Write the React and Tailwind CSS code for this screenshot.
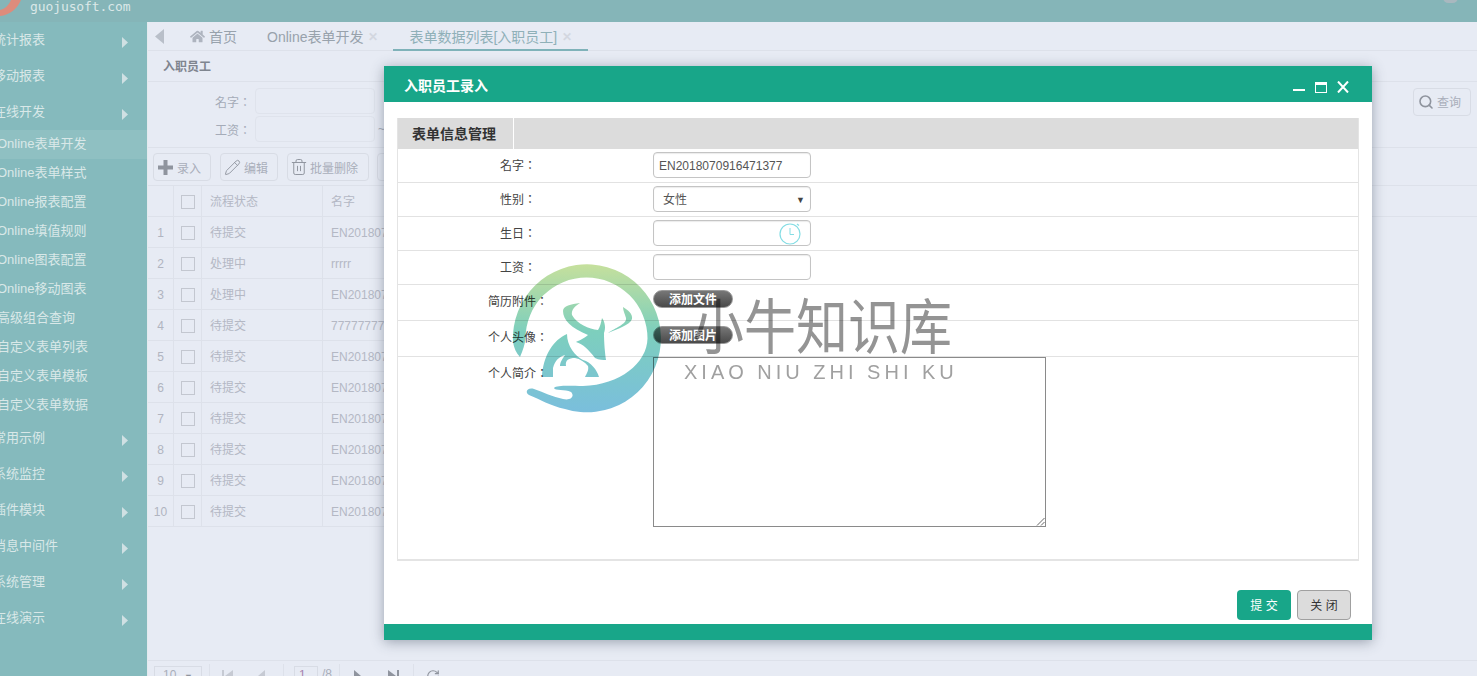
import { FaHome } from "react-icons/fa";
import { Pencil, Trash2, Search, RotateCw } from "lucide-react";

const FONT = "font-['Liberation_Sans','Noto_Sans_CJK_SC',sans-serif]";
// TC has the centred full width colon that the labels show
const LABEL_FONT = "font-['Liberation_Sans','Noto_Sans_CJK_TC',sans-serif]";

const rows = [
  ["待提交", "EN201807"],
  ["处理中", "rrrrr"],
  ["处理中", "EN201807"],
  ["待提交", "77777777"],
  ["待提交", "EN201807"],
  ["待提交", "EN201807"],
  ["待提交", "EN201807"],
  ["待提交", "EN201807"],
  ["待提交", "EN201807"],
  ["待提交", "EN201807"],
];

const subMenu = [
  "Online表单开发",
  "Online表单样式",
  "Online报表配置",
  "Online填值规则",
  "Online图表配置",
  "Online移动图表",
  "高级组合查询",
  "自定义表单列表",
  "自定义表单模板",
  "自定义表单数据",
];

function MenuItem({ label }) {
  return (
    <div className="h-9 flex items-center justify-between pr-[19px] text-[13px] text-[#d9e8e8]">
      <span className="ml-[-7px]">{label}</span>
      <svg width="6" height="11" viewBox="0 0 6 11" className="mt-[5px]">
        <polygon points="0,0 6,5.5 0,11" fill="#cfe0e3" />
      </svg>
    </div>
  );
}

function Sidebar() {
  return (
    <aside className="w-[148px] shrink-0 bg-[#85babd] border-r border-[#e3eaee] overflow-hidden">
      {["统计报表", "移动报表", "在线开发"].map((m) => (
        <MenuItem key={m} label={m} />
      ))}
      {subMenu.map((m, i) => (
        <div
          key={m}
          className={`h-[29px] flex items-center text-[13px] text-[#d9e8e8] ${i === 0 ? "bg-[#8fc0c2]" : ""}`}
        >
          <span className="ml-[-3px] mt-[-2px] whitespace-nowrap">{m}</span>
        </div>
      ))}
      {["常用示例", "系统监控", "插件模块", "消息中间件", "系统管理", "在线演示"].map((m) => (
        <MenuItem key={m} label={m} />
      ))}
    </aside>
  );
}

function Tabs() {
  return (
    <div className="h-[29px] shrink-0 flex border-b border-[#dde1ea] text-sm text-[#98a2ac]">
      <svg width="10" height="15" viewBox="0 0 10 15" className="ml-[7px] mt-[7px]">
        <polygon points="9,0 0,7.5 9,15" fill="#b9bfc9" />
      </svg>
      <FaHome className="ml-[25px] mt-[7px] text-[15px] text-[#aeb4bf]" />
      <span className="ml-[4px] mt-[5px]">首页</span>
      <span className="ml-[30px] mt-[5px]">Online表单开发</span>
      <span className="ml-[5px] mt-[5px] text-[#d3d7e0] font-bold text-xs leading-5">✕</span>
      <div className="ml-[15px] w-[195px] h-[29px] border-b-2 border-[#7fb2b9] flex">
        <span className="ml-[16px] mt-[5px] text-[#8fb0b8] whitespace-nowrap">表单数据列表[入职员工]</span>
        <span className="ml-[5px] mt-[5px] text-[#d3d7e0] font-bold text-xs leading-5">✕</span>
      </div>
    </div>
  );
}

function SearchField({ label, suffix }) {
  return (
    <div className="flex items-start h-[28px]">
      <span className={`w-[40px] mt-[7px] text-xs text-[#a5abb8] ${LABEL_FONT}`}>{label}</span>
      <div className="w-[120px] h-[26px] rounded border border-[#dfe3ec]" />
      {suffix && <span className="ml-[3px] mt-[5px] text-xs text-[#a5abb8]">{suffix}</span>}
    </div>
  );
}

function ToolButton({ icon, label, className }) {
  return (
    <div className={`h-[28px] flex items-center rounded border border-[#d8dce5] text-xs text-[#a9aeba] ${className}`}>
      {icon}
      <span className="mt-[3px]">{label}</span>
    </div>
  );
}

function PlusIcon() {
  return (
    <svg width="15" height="15" viewBox="0 0 15 15">
      <path d="M5.5 0h4v5.5H15v4H9.500V15h-4V9.500H0v-4h5.500z" fill="#8f949e" />
    </svg>
  );
}

function Toolbar() {
  return (
    <div className="h-[38px] shrink-0 border-b border-[#dde1ea] flex items-start pt-[5px] pl-[5px] gap-[9px]">
      <ToolButton className="w-[58px] pl-[4px] gap-[4px]" label="录入" icon={<PlusIcon />} />
      <ToolButton className="w-[58px] pl-[3px] gap-[3px]" label="编辑" icon={<Pencil size={17} strokeWidth={1.3} className="text-[#8f949e]" />} />
      <ToolButton className="w-[82px] pl-[2px] gap-[2px]" label="批量删除" icon={<Trash2 size={18} strokeWidth={1.3} className="text-[#8f949e]" />} />
      <ToolButton className="w-[60px] ml-[-1px] pl-[5px]" label="" icon={<RotateCw size={15} className="text-[#8f949e]" />} />
    </div>
  );
}

function Checkbox() {
  return <div className="w-[14px] h-[14px] border border-[#c3c7d0]" />;
}

function DataTable() {
  return (
    <div className="text-xs text-[#b4b8c4]">
      <div className="h-[31px] flex border-b border-[#dde1ea] w-full pt-[2px]">
        <div className="w-[26px] mt-[-2px] border-r border-[#dde1ea]" />
        <div className="w-[28px] mt-[-2px] pt-[2px] border-r border-[#dde1ea] flex items-center justify-center"><Checkbox /></div>
        <div className="w-[121px] mt-[-2px] pt-[2px] border-r border-[#dde1ea] flex items-center pl-[8px]">流程状态</div>
        <div className="flex items-center pl-[8px]">名字</div>
      </div>
      {rows.map(([status, name], i) => (
        <div key={i} className="h-[31px] w-[700px] flex border-b border-[#dde1ea]">
          <div className="w-[26px] pt-[2px] border-r border-[#dde1ea] flex items-center justify-center text-[#b0b4c0]">{i + 1}</div>
          <div className="w-[28px] pt-[2px] border-r border-[#dde1ea] flex items-center justify-center"><Checkbox /></div>
          <div className="w-[121px] pt-[2px] border-r border-[#dde1ea] flex items-center pl-[8px]">{status}</div>
          <div className="pt-[2px] flex items-center pl-[8px]">{name}</div>
        </div>
      ))}
    </div>
  );
}

function Divider() {
  return <div className="w-px h-[16px] bg-[#dde1ea]" />;
}

function Pager() {
  return (
    <div className="h-[16px] shrink-0 border-t border-[#dde1ea] overflow-hidden flex items-start pt-[3px] pl-[6px] text-xs text-[#a9aeba]">
      <div className="mt-[2px] w-[48px] h-[20px] border border-[#d8dce5] flex pl-[8px] pr-[8px] justify-between">
        <span>10</span>
        <span className="text-[9px] text-[#8f949e] leading-5">▼</span>
      </div>
      <div className="ml-[7px]"><Divider /></div>
      <svg width="11" height="12" viewBox="0 0 11 12" className="ml-[12px] mt-[6px]">
        <path d="M0 0h2v12H0zM11 0v12L3 6z" fill="#c6cad3" />
      </svg>
      <svg width="7" height="12" viewBox="0 0 7 12" className="ml-[25px] mt-[6px]">
        <polygon points="7,0 7,12 0,6" fill="#c6cad3" />
      </svg>
      <div className="ml-[18px]"><Divider /></div>
      <div className="ml-[10px] mt-[2px] w-[24px] h-[20px] border border-[#d8dce5] pl-[4px] text-[#a582b0]">1</div>
      <span className="ml-[4px] mt-[2px]">/8</span>
      <div className="ml-[7px]"><Divider /></div>
      <svg width="7" height="12" viewBox="0 0 7 12" className="ml-[14px] mt-[6px]">
        <polygon points="0,0 7,6 0,12" fill="#8f949e" />
      </svg>
      <svg width="11" height="12" viewBox="0 0 11 12" className="ml-[27px] mt-[6px]">
        <path d="M11 0H9v12h2zM0 0v12l8-6z" fill="#8f949e" />
      </svg>
      <div className="ml-[14px]"><Divider /></div>
      <RotateCw size={14} className="ml-[12px] mt-[5px] text-[#8f949e]" />
    </div>
  );
}

function Background() {
  return (
    <div className="flex-1 min-w-0 bg-[#e7ebf4] flex flex-col">
      <Tabs />
      <div className="h-[31px] shrink-0 border-b border-[#dde1ea] pl-[15px] pt-[8px] text-xs font-bold text-[#7f858f]">入职员工</div>
      <div className="h-[66px] shrink-0 border-b border-[#dde1ea] flex justify-between">
        <div className="pl-[67px] pt-[6px]">
          <SearchField label="名字：" />
          <SearchField label="工资：" suffix="~" />
        </div>
        <div className="mr-[6px] mt-[6px] w-[58px] h-[28px] rounded border border-[#d8dce5] flex items-center gap-[3px] pl-[4px] text-xs text-[#a9aeba]">
          <Search size={16} strokeWidth={2.4} className="text-[#8f949e]" />
          <span className="mt-[2px]">查询</span>
        </div>
      </div>
      <Toolbar />
      <DataTable />
      <div className="flex-1" />
      <Pager />
    </div>
  );
}

function FormRow({ label, h, children }) {
  return (
    <div className="flex border-b border-[#e2e2e2]" style={{ height: h }}>
      <div className={`w-[240px] shrink-0 text-center text-xs text-[#444] pt-[9px] ${LABEL_FONT}`}>{label}</div>
      <div className="pl-[15px] pt-[3px]">{children}</div>
    </div>
  );
}

function TextBox({ children }) {
  return (
    <div className="w-[158px] h-[26px] rounded border border-[#c4c4c4] flex items-center justify-between px-[5px] pt-[2px] text-xs text-[#555] shadow-[inset_0_1px_1px_rgba(0,0,0,0.08)]">
      {children}
    </div>
  );
}

function UploadButton({ label }) {
  return (
    <div className="mt-[2px] w-[80px] h-[18px] rounded-full bg-gradient-to-b from-[#777] to-[#4a4a4a] border border-[#999] text-center text-xs font-bold leading-[19px] text-white">
      {label}
    </div>
  );
}

function WindowIcons() {
  return (
    <div className="flex items-start gap-[10px] mr-[23px] mt-[15px]">
      <svg width="12" height="12" viewBox="0 0 12 12">
        <rect x="0" y="8" width="12" height="2" fill="#fff" />
      </svg>
      <svg width="12" height="12" viewBox="0 0 12 12">
        <rect x="0.5" y="1.500" width="11" height="10" fill="none" stroke="#fff" />
        <rect x="0" y="1" width="12" height="3" fill="#fff" />
      </svg>
      <svg width="12" height="12" viewBox="0 0 12 12">
        <path d="M1 0.500L11 11.500M11 0.500L1 11.500" stroke="#fff" strokeWidth="2" />
      </svg>
    </div>
  );
}

function Modal() {
  return (
    <div className="absolute left-[384px] top-[66px] w-[988px] h-[574px] bg-white flex flex-col shadow-[0_2px_12px_rgba(60,70,90,0.45)]">
      <div className="h-9 shrink-0 bg-[#18a689] flex justify-between">
        <span className="ml-[20px] mt-[10px] text-sm font-bold text-white">入职员工录入</span>
        <WindowIcons />
      </div>
      <div className="mx-[13px] mt-[16px] h-[443px] border-x border-b-2 border-[#e4e4e4]">
        <div className="h-[31px] bg-[#dcdcdc] flex">
          <div className="w-[116px] border-r border-white flex items-center pl-[14px] text-sm font-bold text-[#333]">表单信息管理</div>
        </div>
        <FormRow label="名字：" h={34}>
          <TextBox>EN2018070916471377</TextBox>
        </FormRow>
        <FormRow label="性别：" h={34}>
          <TextBox>
            <span className="pl-[4px]">女性</span>
            <span className="text-[9px] text-[#444]">▼</span>
          </TextBox>
        </FormRow>
        <FormRow label="生日：" h={34}>
          <TextBox>
            <span />
            <svg width="24" height="24" viewBox="0 0 24 24" fill="none" stroke="#84dde4" className="mr-[3px] mt-[-2px]">
              <circle cx="12" cy="13" r="10" strokeWidth="1.2" />
              <path d="M12 7v6.500h4" strokeWidth="1" />
              <path d="M19 3l2 1.500" strokeWidth="1.200" />
            </svg>
          </TextBox>
        </FormRow>
        <FormRow label="工资：" h={34}>
          <TextBox />
        </FormRow>
        <FormRow label="简历附件：" h={36}>
          <UploadButton label="添加文件" />
        </FormRow>
        <FormRow label="个人头像：" h={36}>
          <UploadButton label="添加图片" />
        </FormRow>
        <div className="flex">
          <div className={`w-[240px] shrink-0 text-center text-xs text-[#444] pt-[9px] ${LABEL_FONT}`}>个人简介：</div>
          <div className="pl-[15px]">
            <div className="relative w-[393px] h-[170px] border border-[#8a8a8a]">
              <svg width="9" height="9" viewBox="0 0 9 9" className="absolute right-0 bottom-0">
                <path d="M8.500 1L1 8.500M8.500 5L5 8.500" stroke="#666" strokeWidth="1" />
              </svg>
            </div>
          </div>
        </div>
      </div>
      <div className="flex-1 flex justify-end items-start gap-[6px] pr-[21px] pt-[29px]">
        <div className="w-[54px] h-[30px] pt-[2px] rounded bg-[#18a689] flex items-center justify-center text-xs text-white">提 交</div>
        <div className="w-[54px] h-[30px] pt-[2px] rounded border border-[#a0a0a0] bg-[#dcdcdc] flex items-center justify-center text-xs text-[#333]">关 闭</div>
      </div>
      <div className="h-4 shrink-0 bg-[#18a689]" />
    </div>
  );
}

function Watermark() {
  return (
    <div className="absolute left-[505px] top-[258px] pointer-events-none mix-blend-multiply">
      <svg width="165" height="165" viewBox="0 0 165 165">
        <defs>
          <linearGradient id="wm" x1="0" y1="6" x2="0" y2="156" gradientUnits="userSpaceOnUse">
            <stop offset="0" stopColor="#c6e09c" />
            <stop offset="0.45" stopColor="#7dcfbd" />
            <stop offset="1" stopColor="#7abedd" />
          </linearGradient>
        </defs>
        <g fill="url(#wm)">
          <path d="M15 99C11 95 9 90 8 84A74 74 0 1 1 60 151C45 148 35 141 24 137C19 134 23 129 29 131C38 134 48 139 58 141C66 143 70 138 66 134C60 131 50 133 49 130C52 127 65 128 78 128C115 127 142 105 142.500 80.500A61 61 0 0 0 20.500 80.500C20 86 18 92 15 99Z" />
          <path d="M75 45C66 46 58 48 58 53C58 62 66 70 83 77C78 81 73 83 71 84C78 86 84 92 90 100C94 102 98 102 101 102C100 95 99 85 99 75C101 70 100 64 97 60C96 65 95 69 93 72C84 71 72 66 67 57C66 52 70 48 75 45Z" />
          <path d="M62 76C48 82 38 98 37 119L48 119L48 110C50 102 54 99 60 97C58 100 55 104 55 108L61 108C60 102 64 100 70 100C75 101 80 104 83 108C84 112 82 115 80 119L94 119C92 112 86 104 78 102C70 98 62 88 62 76Z" />
          <path d="M118 49C123 52 128 56 127 61C125 67 112 71 103 75C110 70 122 66 121 60C120 56 118 53 118 49Z" />
        </g>
      </svg>
      <div className="absolute left-[187px] top-[35px] w-[270px] text-[52px] leading-[70px] font-normal text-[#949494] whitespace-nowrap scale-y-[1.15]">小牛知识库</div>
      <div className="absolute left-[179px] top-[102px] text-[20px] leading-6 font-light text-[#a0a0a0] tracking-[4px] whitespace-nowrap">XIAO NIU ZHI SHI KU</div>
    </div>
  );
}

export default function App() {
  return (
    <div className={`relative h-[676px] overflow-hidden flex flex-col bg-[#e7ebf4] ${FONT}`}>
      <header className="h-[22px] shrink-0 bg-[#85b5b8] flex justify-between overflow-hidden">
        <div className="flex">
          <svg width="24" height="18" viewBox="0 0 24 18">
            <path d="M0 16C10 15 17 9 21 0L11 0C9 5 5 9 0 10Z" fill="#dd8c7c" />
          </svg>
          <span className="ml-[6px] mt-[-3px] font-['DejaVu_Sans_Mono',monospace] text-[13px] tracking-[-0.1px] text-[#dbe8e8]">guojusoft.com</span>
        </div>
        <div className="mr-[19px] mt-[-8px] w-[15px] h-[11px] rounded-full bg-[#a9b8bf]" />
      </header>
      <div className="flex-1 min-h-0 flex">
        <Sidebar />
        <Background />
      </div>
      <Modal />
      <Watermark />
    </div>
  );
}
